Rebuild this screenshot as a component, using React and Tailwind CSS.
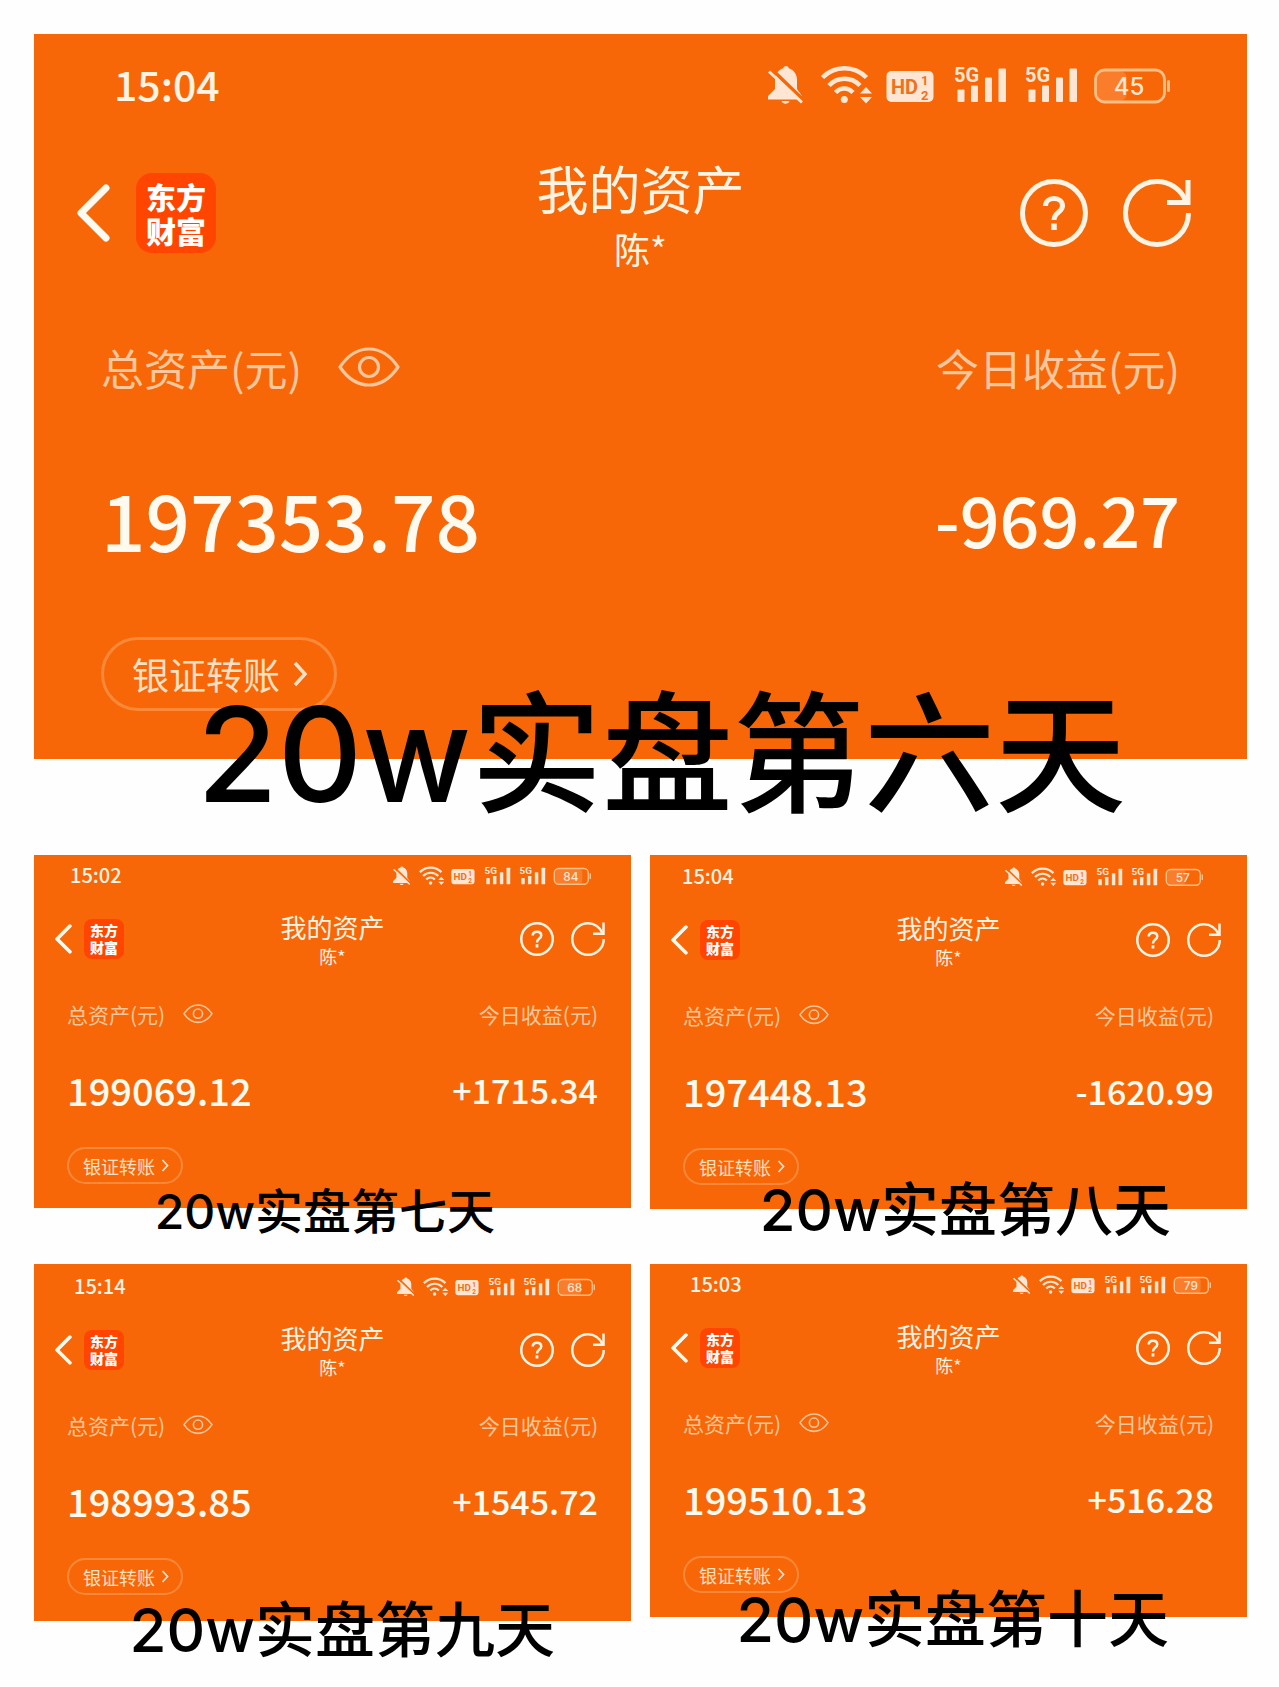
import React, { useState } from "react";
import clsx from "clsx";

const DAYS = [
  { id: 6, time: "15:04", battery: 45, total: "197353.78", profit: "-969.27", caption: "20w实盘第六天",
    size: "lg", card: "pt-[26px] pb-12", status: "pl-20 pr-[77px]", note: "text-[131px] right-[121px] -bottom-[61px]" },
  { id: 7, time: "15:02", battery: 84, total: "199069.12", profit: "+1715.34", caption: "20w实盘第七天",
    size: "sm", card: "pt-2 pb-6", status: "pl-9 pr-10", note: "text-[48px] right-[136px] -bottom-7" },
  { id: 8, time: "15:04", battery: 57, total: "197448.13", profit: "-1620.99", caption: "20w实盘第八天",
    size: "sm", card: "pt-[9px] pb-6", status: "pl-8 pr-11", note: "text-[58px] right-[76px] -bottom-[30px]" },
  { id: 9, time: "15:14", battery: 68, total: "198993.85", profit: "+1545.72", caption: "20w实盘第九天",
    size: "sm", card: "pt-2.5 pb-[26px]", status: "pl-10 pr-9", note: "text-[60px] right-[76px] -bottom-[39px]" },
  { id: 10, time: "15:03", battery: 79, total: "199510.13", profit: "+516.28", caption: "20w实盘第十天",
    size: "sm", card: "pt-2 pb-6", status: "pl-10 pr-9", note: "text-[61px] right-[78px] -bottom-[34px]" },
];

const SIZES = {
  lg: {
    statusRow: "items-start h-[49px]", time: "text-[41px] leading-[46px]", statusIcons: "w-[402px] mt-[3px]",
    header: "mt-[42px]", left: "pl-[43px] gap-[26px]", right: "pr-14 gap-[35px]",
    back: "w-[33px]", logo: "size-20 rounded-2xl text-[30px] leading-[34px]", icon: "size-[68px]",
    title: "text-[52px] leading-[74px]", name: "text-[36px] leading-[46px] pb-1",
    body: "px-[67px]", labels: "mt-[62px] text-[43px] leading-[60px]", eyeGap: "gap-9", eye: "w-[62px]",
    numbers: "mt-[71px] leading-[100px]", total: "text-[78px]", profit: "text-[70px]",
    transfer: "mt-[69px] h-[74px] pl-7 pr-[26px] gap-3 border-[3px] text-[37px]", chevron: "w-4",
  },
  sm: {
    statusRow: "items-start h-[25px]", time: "text-[20px] leading-[23px]", statusIcons: "w-[198px] mt-0.5",
    header: "mt-5", left: "pl-[21px] gap-3", right: "pr-[26px] gap-[17px]",
    back: "w-[17px]", logo: "size-10 rounded-lg text-[14px] leading-[17px]", icon: "size-[34px]",
    title: "text-[26px] leading-[37px]", name: "text-[18px] leading-[23px] pb-0.5",
    body: "px-[33px]", labels: "mt-[29px] text-[21px] leading-[30px]", eyeGap: "gap-[18px]", eye: "w-[30px]",
    numbers: "mt-9 leading-[50px]", total: "text-[38px]", profit: "text-[34px]",
    transfer: "mt-8 h-[37px] pl-3.5 pr-3 gap-1.5 border-2 text-[18px]", chevron: "w-2",
  },
};

export default function App() {
  const [first, ...rest] = DAYS;
  return (
    <main className="bg-[#fefefe] pl-[34px] pr-8 pt-[34px] pb-[65px] font-['Noto_Sans_CJK_SC',sans-serif]">
      <AssetCard day={first} />
      <div className="mt-24 grid grid-cols-2 items-start gap-x-[19px] gap-y-[55px]">
        {rest.map((d) => <AssetCard key={d.id} day={d} />)}
      </div>
    </main>
  );
}

function AssetCard({ day }) {
  const s = SIZES[day.size];
  const [hidden, setHidden] = useState(false);

  return (
    <section className={clsx("relative bg-[#f76707] text-[#fff3e4]", day.card)}>
      <div className={clsx("flex justify-between", s.statusRow, day.status)}>
        <span className={clsx("font-medium", s.time)}>{day.time}</span>
        <StatusIcons battery={day.battery} className={s.statusIcons} />
      </div>

      <header className={clsx("grid grid-cols-[1fr_auto_1fr] items-center", s.header)}>
        <div className={clsx("flex items-center", s.left)}>
          <button type="button" aria-label="返回" className={s.back}>
            <svg viewBox="0 0 33 58" fill="none" stroke="#fffaf0" strokeWidth="7" strokeLinecap="round" strokeLinejoin="round">
              <path d="M29 4 4 29l25 25" />
            </svg>
          </button>
          <div className={clsx("flex flex-col items-center justify-center bg-[#ff4500] font-black text-white", s.logo)}>
            <span>东方</span>
            <span>财富</span>
          </div>
        </div>
        <div className="text-center">
          <h2 className={s.title}>我的资产</h2>
          <p className={s.name}>陈*</p>
        </div>
        <div className={clsx("flex items-center justify-end", s.right)}>
          <button type="button" aria-label="帮助" className={s.icon}>
            <svg viewBox="0 0 68 68" fill="none" stroke="currentColor" strokeWidth="5">
              <circle cx="34" cy="34" r="31.500" />
              <path d="M25.500 27c0-4.500 3.500-7.500 8.500-7.500s8.500 3 8.500 7.500c0 6-8.500 6.500-8.500 14" />
              <path d="M34 44.500V51" strokeWidth="5.500" />
            </svg>
          </button>
          <button type="button" aria-label="刷新" className={s.icon}>
            <svg viewBox="0 0 68 68" fill="none" stroke="currentColor" strokeWidth="5">
              <path d="M65.500 34A31.500 31.500 0 1 1 34 2.500c13 0 24 8 28.500 19" />
              <path d="M65 1v22.500H44" />
            </svg>
          </button>
        </div>
      </header>

      <div className={s.body}>
        <div className={clsx("flex items-center justify-between text-[#fdc69c]", s.labels)}>
          <div className={clsx("flex items-center", s.eyeGap)}>
            <span>总资产(元)</span>
            <button type="button" aria-label="显示或隐藏金额" className={s.eye} onClick={() => setHidden(!hidden)}>
              <svg viewBox="0 0 62 40" fill="none" stroke="currentColor" strokeWidth="3.200" strokeLinejoin="round">
                <path d="M2 20C10 8 19 2 31 2s21 6 29 18c-8 12-17 18-29 18S10 32 2 20Z" />
                <circle cx="31" cy="20" r="9.500" />
              </svg>
            </button>
          </div>
          <span>今日收益(元)</span>
        </div>
        <div className={clsx("flex items-center justify-between font-medium text-[#fffaf0]", s.numbers)}>
          <span className={s.total}>{hidden ? "****" : day.total}</span>
          <span className={s.profit}>{hidden ? "****" : day.profit}</span>
        </div>
        <button type="button" className={clsx("flex items-center rounded-full border-[#fb8939] leading-none text-[#ffe0c4]", s.transfer)}>
          银证转账
          <svg viewBox="0 0 16 26" className={s.chevron} fill="none" stroke="currentColor" strokeWidth="3.500">
            <path d="m3 2 10 11L3 24" />
          </svg>
        </button>
      </div>

      <p className={clsx("absolute whitespace-nowrap font-['Inter','Noto_Sans_CJK_SC',sans-serif] font-medium leading-none text-black", day.note)}>
        {day.caption}
      </p>
    </section>
  );
}

function Signal({ x }) {
  return (
    <g transform={`translate(${x} 0)`}>
      <text x="0" y="18.500" fontSize="20" fontWeight="700">5G</text>
      <rect x="3.500" y="26.500" width="7" height="12.500" rx="1" />
      <rect x="17" y="22.500" width="7" height="16.500" rx="1" />
      <rect x="31" y="14.500" width="7" height="24.500" rx="1" />
      <rect x="44.500" y="5.500" width="7.500" height="33.500" rx="1" />
    </g>
  );
}

function StatusIcons({ battery, className }) {
  return (
    <svg viewBox="0 0 402 46" className={className} fill="#ffe6d2" fontFamily="'Roboto', sans-serif">
      {/* muted bell */}
      <path d="M18 3c1.700 0 2.500 1 2.800 2.300C26 7 29 11.500 29 17v9l5 7v3.500H0V33l7-7v-9c0-5.500 3-10 8.200-11.700C15.500 4 16.300 3 18 3Z" />
      <path d="M13.500 38h8c-1 3.500-7 3.500-8 0Z" />
      <path d="m3 5.500 33 32" stroke="#f76707" strokeWidth="3.500" />
      <path d="m1 8.500 33 31" stroke="#ffe6d2" strokeWidth="3" />
      {/* wifi */}
      <g fill="none" stroke="#ffe6d2" strokeWidth="4.500">
        <path d="M54.500 14.500c12-12.500 32-12.500 44 0" />
        <path d="M61 22.500c8.500-9 22.500-9 31 0" />
        <path d="M67.500 29.500c5-5.500 12.500-5.500 17.500 0" />
      </g>
      <circle cx="76.300" cy="36.500" r="3.500" />
      <path d="m92 30.500 6-6.500 6 6.500ZM92 34h12l-6 6.500Z" />
      {/* HD */}
      <rect x="118.500" y="8" width="47" height="31" rx="5" />
      <g fill="#f0701c" fontWeight="700">
        <text x="123" y="31" fontSize="20">HD</text>
        <text x="153" y="22" fontSize="13">1</text>
        <text x="153" y="37" fontSize="13">2</text>
      </g>
      <Signal x={186} />
      <Signal x={257} />
      {/* battery */}
      <rect x="329" y="8" width={battery * 0.66} height="30" rx="7" fill="#fa7d2b" />
      <rect x="327.500" y="7" width="69" height="32" rx="9" fill="none" stroke="#fdbf86" strokeWidth="2.800" />
      <rect x="399" y="17" width="3" height="12" rx="1.500" fill="#fdbf86" />
      <text x="361" y="31.500" fontSize="24" textAnchor="middle" fontFamily="'Inter', sans-serif" fontWeight="500">{battery}</text>
    </svg>
  );
}
